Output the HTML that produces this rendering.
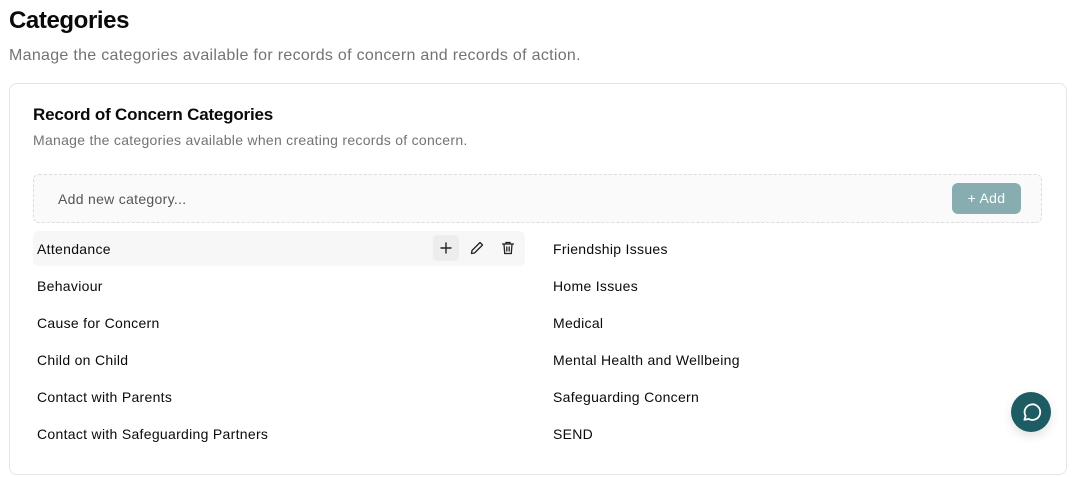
<!DOCTYPE html>
<html><head><style>
*{box-sizing:border-box;margin:0;padding:0}
body{width:1080px;height:477px;background:#fff;font-family:"Liberation Sans",sans-serif;color:#0a0a0a;position:relative;overflow:hidden}
.abs{position:absolute}
h1{position:absolute;left:9px;top:7px;font-size:24px;font-weight:700;letter-spacing:-0.4px}
.sub{left:9px;top:47px;font-size:16px;color:#737373;letter-spacing:0.3px}
.card{left:9px;top:83px;width:1058px;height:392px;border:1px solid #e5e5e5;border-radius:8px}
.ct{left:33px;top:105px;font-size:17px;font-weight:700;letter-spacing:-0.2px}
.cd{left:33px;top:132px;font-size:14px;color:#737373;letter-spacing:0.28px}
.inp{left:33px;top:174px;width:1009px;height:49px;border:1.5px dashed #dcdcdc;border-radius:6px;background:#fafafa}
.ph{left:58px;top:191px;font-size:14px;color:#555;letter-spacing:0.3px}
.btn{left:952px;top:183px;width:69px;height:31px;background:#87adb0;border-radius:6px;color:#fff;font-size:14px;line-height:31px;text-align:center;letter-spacing:0.3px}
.row{font-size:14px;position:absolute;letter-spacing:0.3px}
.hl{left:33px;top:231px;width:492px;height:35px;background:#f7f7f7;border-radius:6px}
.pb{left:433px;top:235px;width:26px;height:26px;background:#ededed;border-radius:5px}
.chat{left:1011px;top:392px;width:40px;height:40px;border-radius:50%;background:#1d5c63;box-shadow:0 4px 10px rgba(0,0,0,.12)}
</style></head><body>
<h1>Categories</h1>
<div class="abs sub">Manage the categories available for records of concern and records of action.</div>
<div class="abs card"></div>
<div class="abs ct">Record of Concern Categories</div>
<div class="abs cd">Manage the categories available when creating records of concern.</div>
<div class="abs inp"></div>
<div class="abs ph">Add new category...</div>
<div class="abs btn">+ Add</div>
<div class="abs hl"></div>
<div class="abs pb"></div>
<svg class="abs" style="left:438px;top:240px" width="16" height="16" viewBox="0 0 16 16" fill="none" stroke="#222" stroke-width="1.4" stroke-linecap="round"><path d="M8 3v10M3 8h10"/></svg>
<svg class="abs" style="left:469px;top:240px" width="16" height="16" viewBox="0 0 16 16" fill="none" stroke="#222" stroke-width="1.3" stroke-linejoin="round"><path d="M11 2.5l2.5 2.5L5.5 13 2.5 13.5 3 10.5z"/></svg>
<svg class="abs" style="left:500px;top:240px" width="16" height="16" viewBox="0 0 16 16" fill="none" stroke="#222" stroke-width="1.3" stroke-linecap="round"><path d="M2.5 4h11M6 4V2.5h4V4M4 4l.7 9.5h6.6L12 4M6.8 7v4M9.2 7v4"/></svg>
<div class="row" style="left:37px;top:241px">Attendance</div>
<div class="row" style="left:37px;top:278px">Behaviour</div>
<div class="row" style="left:37px;top:315px">Cause for Concern</div>
<div class="row" style="left:37px;top:352px">Child on Child</div>
<div class="row" style="left:37px;top:389px">Contact with Parents</div>
<div class="row" style="left:37px;top:426px">Contact with Safeguarding Partners</div>
<div class="row" style="left:553px;top:241px">Friendship Issues</div>
<div class="row" style="left:553px;top:278px">Home Issues</div>
<div class="row" style="left:553px;top:315px">Medical</div>
<div class="row" style="left:553px;top:352px">Mental Health and Wellbeing</div>
<div class="row" style="left:553px;top:389px">Safeguarding Concern</div>
<div class="row" style="left:553px;top:426px">SEND</div>
<div class="abs chat"></div>
<svg class="abs" style="left:1019px;top:400px" width="24" height="24" viewBox="0 0 20 20" fill="none" stroke="#fff" stroke-width="1.5" stroke-linejoin="round"><path d="M4.5 16.5l1-3.2A6.5 6.5 0 1 1 8 15.8z"/></svg>
</body></html>
